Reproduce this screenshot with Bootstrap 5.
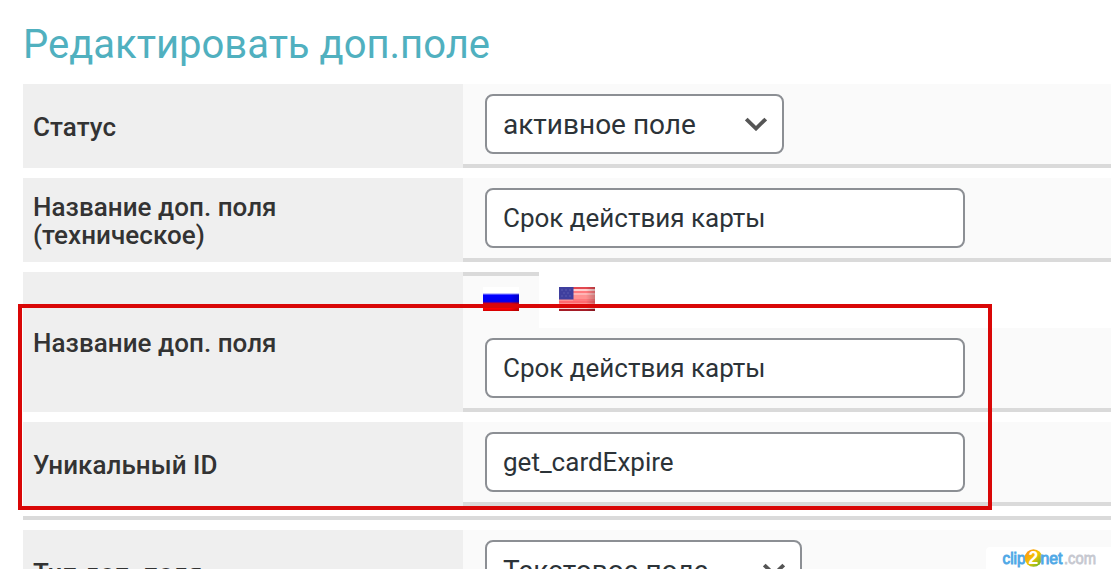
<!DOCTYPE html>
<html lang="ru">
<head>
<meta charset="utf-8">
<meta name="viewport" content="width=device-width, initial-scale=1">
<title>Редактировать доп.поле</title>
<link href="https://cdn.jsdelivr.net/npm/bootstrap@5.3.0/dist/css/bootstrap.min.css" rel="stylesheet">
<style>
body{font-family:Roboto,"Liberation Sans",sans-serif;font-size:26px;line-height:28px;color:#333;height:569px;overflow:hidden;background:#fff}
.page{padding:21px 0 0 23px;height:569px}
h1{font-size:40px;line-height:48px;font-weight:400;color:#50b0bf;margin:0 0 15px}
.rows{display:flex;flex-direction:column;gap:10px}
.field-name{width:440px;flex:none;background:#efefef;padding:2px 10px 0;font-weight:500;letter-spacing:.05px;color:#333}
.field-value{background:#fafafa;border-bottom:4px solid #dadada;padding:10px 22px}
.box{width:480px;height:60px;border:2px solid #8c8f94;border-radius:8px;background:#fff;color:#2c3338;font-size:26px;line-height:56px;padding:0 16px}
.pick{display:flex;justify-content:space-between;align-items:center;padding-right:15px;font-size:28px}
.pick span{padding-top:2px}
.pick svg{flex:none}
.w-status{width:299px}.w-kind{width:317px}
.rule{height:4px;background:#dadada}
.langs{height:56px;background:#fff}
.lang{width:76px;padding:15px 20px 0;height:56px}
.lang.active{background:#fafafa;border-top:4px solid #dadada;padding-top:11px}
.lang svg{display:block}
.frame{left:18px;top:304px;width:974px;height:206px;border:4px solid #d90707}
.mark-c2n{left:986px;top:547px;width:125px;height:22px;background:#fff;border-top-left-radius:4px}
.mark-c2n svg{display:block}
</style>
</head>
<body class="position-relative">
<main class="page overflow-hidden">
<h1>Редактировать доп.поле</h1>
<div class="rows">
  <div class="d-flex">
    <div class="field-name d-flex align-items-center">Статус</div>
    <div class="field-value flex-grow-1"><div class="box pick w-status"><span>активное поле</span><svg width="22" height="14" viewBox="0 0 22 14"><path d="M1.300 2 11 11.500 20.700 2" fill="none" stroke="#555" stroke-width="3.800"/></svg></div></div>
  </div>
  <div class="d-flex">
    <div class="field-name d-flex align-items-center">Название доп. поля<br>(техническое)</div>
    <div class="field-value flex-grow-1"><div class="box">Срок действия карты</div></div>
  </div>
  <div class="d-flex">
    <div class="field-name d-flex align-items-center">Название доп. поля</div>
    <div class="flex-grow-1">
      <div class="langs d-flex">
        <div class="lang active"><svg width="36" height="24" viewBox="0 0 36 24"><defs><linearGradient id="ru" x2="0" y2="1"><stop offset="0" stop-color="#fff"/><stop offset=".25" stop-color="#fff"/><stop offset=".3" stop-color="#6666ff"/><stop offset=".35" stop-color="#00f"/><stop offset=".6" stop-color="#00e"/><stop offset=".7" stop-color="#e00"/><stop offset=".9" stop-color="#f00"/><stop offset="1" stop-color="#d00000"/></linearGradient><linearGradient id="edge"><stop offset=".75" stop-opacity="0"/><stop offset="1" stop-opacity=".2"/></linearGradient></defs><path fill="url(#ru)" d="M0 0h36v24H0z"/><path fill="url(#edge)" d="M0 7h36v17H0z"/></svg></div>
        <div class="lang"><svg width="36" height="24" viewBox="0 0 36 24"><path fill="#ff9292" d="M0 0h36v24H0z"/><path fill="#e24850" d="M14 0h22v2H14z"/><path fill="#ffd0d0" d="M14 2h22v2H14z"/><path fill="#ff7a7e" d="M14 4h22v2H14zM14 12h22v2H14z"/><path fill="#ffb5b5" d="M14 6h22v2H14z"/><path fill="#ff6b70" d="M0 14h36v2H0z"/><path fill="#f4d6d6" d="M0 20h36v2H0z"/><path fill="#a51c26" d="M0 22h36v2H0z"/><path fill="#3f3f9e" d="M0 0h14.500v12.500H0z"/><g fill="#4c4ca6"><path d="M2 2h2v2H2zM6 2h2v2H6zM10 2h2v2h-2zM4 5h2v2H4zM8 5h2v2H8zM2 8h2v2H2zM6 8h2v2H6zM10 8h2v2h-2z"/></g><path fill="url(#edge)" d="M0 0h36v24H0z"/></svg></div>
      </div>
      <div class="field-value"><div class="box">Срок действия карты</div></div>
    </div>
  </div>
  <div class="d-flex">
    <div class="field-name d-flex align-items-center">Уникальный ID</div>
    <div class="field-value flex-grow-1"><div class="box">get_cardExpire</div></div>
  </div>
  <div class="rule"></div>
  <div class="d-flex">
    <div class="field-name d-flex align-items-center">Тип доп. поля</div>
    <div class="field-value flex-grow-1"><div class="box pick w-kind"><span>Текстовое поле</span><svg width="22" height="14" viewBox="0 0 22 14"><path d="M1.300 2 11 11.500 20.700 2" fill="none" stroke="#555" stroke-width="3.800"/></svg></div></div>
  </div>
</div>
</main>
<div class="frame position-absolute"></div>
<div class="mark-c2n position-absolute"><svg width="125" height="22" viewBox="0 0 125 22" font-family="Liberation Sans, sans-serif" font-size="16"><defs><linearGradient id="ball" x2="1" y2="1"><stop offset="0" stop-color="#ff8a1c"/><stop offset=".5" stop-color="#f5c400"/><stop offset=".9" stop-color="#67b82e"/></linearGradient></defs><text x="16.500" y="16.500" textLength="23" lengthAdjust="spacingAndGlyphs" fill="#4fa8e6" stroke="#4fa8e6" stroke-width=".9">clip</text><circle cx="47.500" cy="11" r="8.800" fill="url(#ball)"/><text x="42.600" y="17" font-size="17.500" font-weight="700" fill="#fff">2</text><text x="54.500" y="16.500" textLength="22" lengthAdjust="spacingAndGlyphs" fill="#4fa8e6" stroke="#4fa8e6" stroke-width=".9">net</text><text x="78" y="16.500" textLength="32" lengthAdjust="spacingAndGlyphs" fill="#c6c8d0" stroke="#c6c8d0" stroke-width=".8">.com</text></svg></div>
<script src="https://cdn.jsdelivr.net/npm/bootstrap@5.3.0/dist/js/bootstrap.bundle.min.js"></script>
</body>
</html>
